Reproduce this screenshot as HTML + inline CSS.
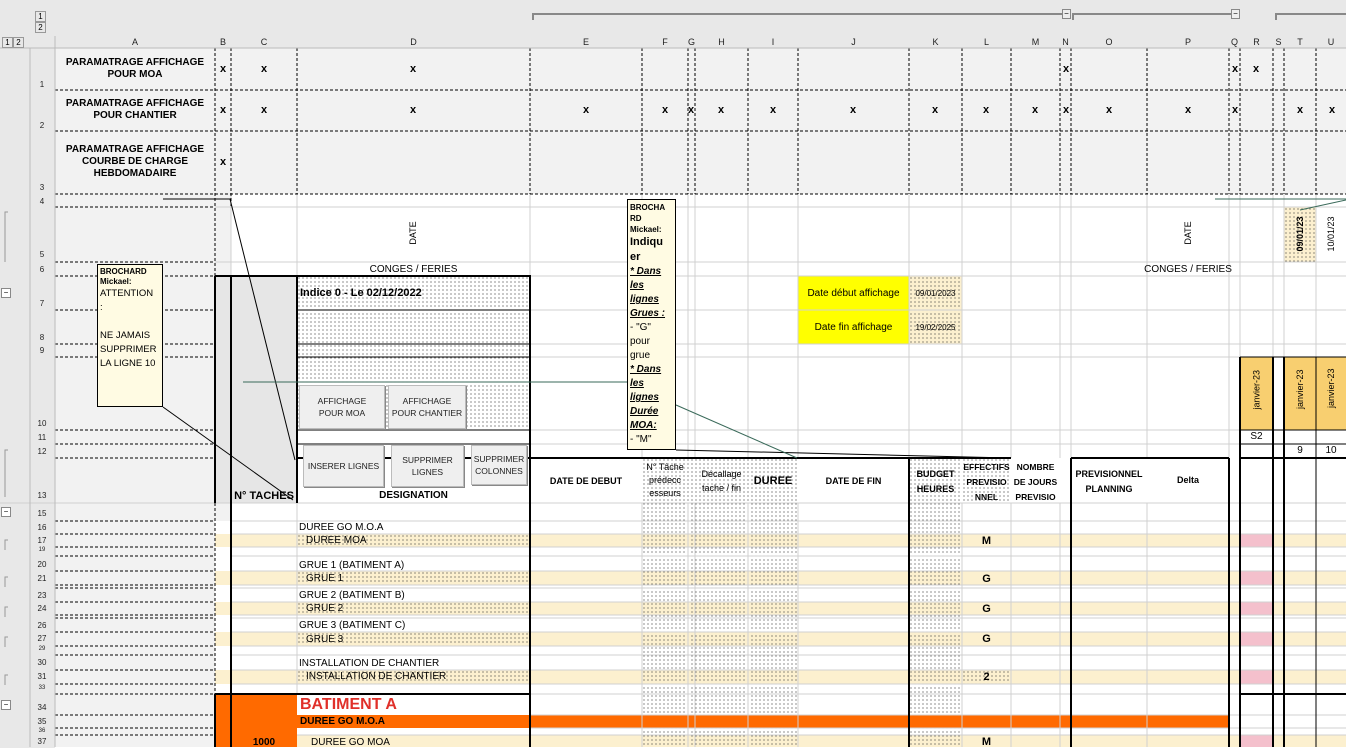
<!DOCTYPE html>
<html><head><meta charset="utf-8"><style>
*{margin:0;padding:0;box-sizing:border-box}
body{width:1346px;height:747px;overflow:hidden;position:relative;background:#fff;font-family:"Liberation Sans",Arial,sans-serif;font-size:10px;color:#000}
.a{position:absolute}
.c{position:absolute;text-align:center;white-space:nowrap}
.dot{background-image:radial-gradient(#333 0.5px,transparent 0.8px);background-size:4px 4px}
.cr{background-color:#fcf0cf}
.btn{position:absolute;background:#efefef;border:1px solid #bbb;box-shadow:1px 1px 0 #888;font-size:8.5px;text-align:center;display:flex;align-items:center;justify-content:center;line-height:12px;color:#222}
.rn{position:absolute;left:30px;width:24px;text-align:center;font-size:8px;color:#222}
.h{position:absolute;top:37px;font-size:9px;text-align:center;color:#222}
.b{font-weight:bold}
.x{position:absolute;font-size:11px;font-weight:bold;transform:translateX(-50%)}
</style></head><body>
<div class="a" style="left:0;top:0;width:1346px;height:48px;background:#e8e8e8"></div>
<div class="a" style="left:0;top:48px;width:55px;height:700px;background:#e8e8e8"></div>
<div class="a" style="left:55px;top:48px;width:1291px;height:146px;background:#f2f2f2"></div>
<div class="a" style="left:55px;top:194px;width:160px;height:553px;background:#f2f2f2"></div>
<div class="a" style="left:215px;top:194px;width:16px;height:327px;background:#f2f2f2"></div>
<div class="a cr" style="left:215px;top:534px;width:1131px;height:13px"></div>
<div class="a cr" style="left:215px;top:571px;width:1131px;height:14px"></div>
<div class="a cr" style="left:215px;top:602px;width:1131px;height:13px"></div>
<div class="a cr" style="left:215px;top:632px;width:1131px;height:14px"></div>
<div class="a cr" style="left:215px;top:670px;width:1131px;height:14px"></div>
<div class="a cr" style="left:215px;top:735px;width:1131px;height:12px"></div>
<div class="a dot" style="left:642px;top:458px;width:156px;height:289px"></div>
<div class="a dot" style="left:909px;top:458px;width:53px;height:289px"></div>
<div class="a dot" style="left:962px;top:458px;width:49px;height:45px"></div>
<div class="a dot" style="left:962px;top:670px;width:49px;height:14px"></div>
<div class="a dot" style="left:297px;top:534px;width:233px;height:13px"></div>
<div class="a dot" style="left:297px;top:571px;width:233px;height:14px"></div>
<div class="a dot" style="left:297px;top:602px;width:233px;height:13px"></div>
<div class="a dot" style="left:297px;top:632px;width:233px;height:14px"></div>
<div class="a dot" style="left:297px;top:670px;width:233px;height:14px"></div>
<div class="a" style="left:215px;top:276px;width:82px;height:227px;background:#e6e6e6"></div>
<div class="a dot" style="left:297px;top:276px;width:233px;height:154px"></div>
<div class="a" style="left:215px;top:694px;width:82px;height:53px;background:#ff6a00"></div>
<div class="a" style="left:297px;top:715px;width:932px;height:13px;background:#ff6a00"></div>
<div class="a" style="left:1240px;top:534px;width:33px;height:13px;background:#f4c0cc"></div>
<div class="a" style="left:1240px;top:571px;width:33px;height:14px;background:#f4c0cc"></div>
<div class="a" style="left:1240px;top:602px;width:33px;height:13px;background:#f4c0cc"></div>
<div class="a" style="left:1240px;top:632px;width:33px;height:14px;background:#f4c0cc"></div>
<div class="a" style="left:1240px;top:670px;width:33px;height:14px;background:#f4c0cc"></div>
<div class="a" style="left:1240px;top:735px;width:33px;height:12px;background:#f4c0cc"></div>
<div class="a" style="left:798px;top:276px;width:111px;height:68px;background:#ffff00"></div>
<div class="a dot cr" style="left:909px;top:276px;width:53px;height:68px"></div>
<div class="a dot cr" style="left:1284px;top:207px;width:32px;height:55px"></div>
<div class="a" style="left:1240px;top:357px;width:33px;height:73px;background:#f8cf70"></div>
<div class="a" style="left:1284px;top:357px;width:32px;height:73px;background:#f8cf70"></div>
<div class="a" style="left:1316px;top:357px;width:30px;height:73px;background:#f8cf70"></div>

<svg class="a" style="left:0;top:0" width="1346" height="747">
<g stroke="#d0d0d0" stroke-width="1">
<path d="M530 194V458M642 194V458M688 194V458M695 194V458M748 194V458M798 194V458M909 194V458M962 194V458M1011 194V458M1060 194V458M1071 194V458M1147 194V458M1229 194V458M1240 194V357M1273 194V357M1284 194V357M1316 194V357"/>
<path d="M215 207H1346M215 262H1346M530 276H1346M530 310H1346M530 344H1346M530 357H1346M530 430H1240M530 444H1240M297 194V276M231 194V276"/>
<path d="M231 521H1346M231 534H1346M231 547H1346M231 556H1346M231 571H1346M231 585H1346M231 588H1346M231 602H1346M231 615H1346M231 618H1346M231 632H1346M231 646H1346M231 655H1346M231 670H1346M231 684H1346M231 694H1346M530 715H1346M530 728H1346M297 735H1346"/>
<path d="M297 503V694M642 503V747M688 503V747M695 503V747M748 503V747M798 503V747M962 503V747M1011 503V747M1060 503V747M1147 503V747"/>
<path d="M0 503H1346"/>
</g>
<g stroke="#000" stroke-width="1" stroke-dasharray="3 2">
<path d="M55 90H1346M55 131H1346M55 194H1346M55 207H215M55 262H215M55 276H215M55 310H215M55 344H215M55 357H215M55 430H215M55 444H215M55 458H215M55 521H215M55 534H215M55 547H215M55 556H215M55 571H215M55 585H215M55 588H215M55 602H215M55 615H215M55 618H215M55 632H215M55 646H215M55 655H215M55 670H215M55 684H215M55 694H215M55 715H215M55 728H215M55 735H215"/>
<path d="M215 48V747M231 48V207M297 48V194M530 48V194M642 48V194M688 48V194M695 48V194M748 48V194M798 48V194M909 48V194M962 48V194M1011 48V194M1060 48V194M1071 48V194M1147 48V194M1229 48V194M1240 48V194M1273 48V194M1284 48V194M1316 48V194"/>
</g>
<g stroke="#000" stroke-width="2" fill="none">
<path d="M215 276H530V503M215 276V503M231 276V747M297 276V503M297 458H1011M1071 458H1229M1240 458H1346M530 458V747M909 458V747M1071 458V747M1229 458V747M1273 357V747M1284 357V747M215 694H530M215 694V747M1240 357V747M1240 694H1346"/>
</g>
<g stroke="#000" stroke-width="1" fill="none">
<path d="M297 310H530M297 344H530M297 357H530M297 430H530M297 444H530M1316 357V747M1240 430H1273M1240 444H1346M1316 444V458M1240 357H1346M1240 430H1346"/>
<path d="M163 199H230L295 460"/><path d="M163 407L293 500"/>
<path d="M676 450L1010 458"/>
</g>
<g stroke="#3a6a5a" stroke-width="1"><path d="M243 382H627M676 405L797 458M1215 199H1346M1300 210L1346 200"/></g>
<g stroke="#888" stroke-width="2" fill="none"><path d="M533 20V14H1068M1073 20V14H1236M1276 20V14H1346"/></g>
<g stroke="#bbb" stroke-width="1"><path d="M30 48V747M55 36V747M0 48H1346"/></g>
<g stroke="#999" fill="none"><path d="M8 212H5V262M8 450H5V497M8 540H5V550M8 577H5V587M8 607H5V617M8 637H5V647M8 675H5V685"/></g>
</svg>
<div class="a" style="left:35px;top:11px;width:11px;height:11px;border:1px solid #999;font-size:8px;text-align:center;line-height:9px">1</div>
<div class="a" style="left:35px;top:22px;width:11px;height:11px;border:1px solid #999;font-size:8px;text-align:center;line-height:9px">2</div>
<div class="a" style="left:2px;top:37px;width:11px;height:11px;border:1px solid #999;font-size:8px;text-align:center;line-height:9px">1</div>
<div class="a" style="left:13px;top:37px;width:11px;height:11px;border:1px solid #999;font-size:8px;text-align:center;line-height:9px">2</div>
<div class="a" style="left:1062px;top:9px;width:9px;height:10px;border:1px solid #888;background:#eee;font-size:8px;line-height:7px;text-align:center">−</div>
<div class="a" style="left:1231px;top:9px;width:9px;height:10px;border:1px solid #888;background:#eee;font-size:8px;line-height:7px;text-align:center">−</div>
<div class="a" style="left:1px;top:288px;width:10px;height:10px;border:1px solid #888;background:#fff;font-size:8px;line-height:7px;text-align:center">−</div>
<div class="a" style="left:1px;top:507px;width:10px;height:10px;border:1px solid #888;background:#fff;font-size:8px;line-height:7px;text-align:center">−</div>
<div class="a" style="left:1px;top:700px;width:10px;height:10px;border:1px solid #888;background:#fff;font-size:8px;line-height:7px;text-align:center">−</div>

<div class="h" style="left:55px;width:160px">A</div><div class="h" style="left:215px;width:16px">B</div><div class="h" style="left:231px;width:66px">C</div><div class="h" style="left:297px;width:233px">D</div><div class="h" style="left:530px;width:112px">E</div><div class="h" style="left:642px;width:46px">F</div><div class="h" style="left:688px;width:7px">G</div><div class="h" style="left:695px;width:53px">H</div><div class="h" style="left:748px;width:50px">I</div><div class="h" style="left:798px;width:111px">J</div><div class="h" style="left:909px;width:53px">K</div><div class="h" style="left:962px;width:49px">L</div><div class="h" style="left:1011px;width:49px">M</div><div class="h" style="left:1060px;width:11px">N</div><div class="h" style="left:1071px;width:76px">O</div><div class="h" style="left:1147px;width:82px">P</div><div class="h" style="left:1229px;width:11px">Q</div><div class="h" style="left:1240px;width:33px">R</div><div class="h" style="left:1273px;width:11px">S</div><div class="h" style="left:1284px;width:32px">T</div><div class="h" style="left:1316px;width:30px">U</div>

<div class="rn" style="top:80px">1</div><div class="rn" style="top:121px">2</div><div class="rn" style="top:183px">3</div><div class="rn" style="top:197px">4</div><div class="rn" style="top:250px">5</div><div class="rn" style="top:265px">6</div><div class="rn" style="top:299px">7</div><div class="rn" style="top:333px">8</div><div class="rn" style="top:346px">9</div><div class="rn" style="top:419px">10</div><div class="rn" style="top:433px">11</div><div class="rn" style="top:447px">12</div><div class="rn" style="top:491px">13</div><div class="rn" style="top:509px">15</div><div class="rn" style="top:523px">16</div><div class="rn" style="top:536px">17</div><div class="rn" style="top:547px;font-size:6px">19</div><div class="rn" style="top:560px">20</div><div class="rn" style="top:574px">21</div><div class="rn" style="top:591px">23</div><div class="rn" style="top:604px">24</div><div class="rn" style="top:621px">26</div><div class="rn" style="top:634px">27</div><div class="rn" style="top:646px;font-size:6px">29</div><div class="rn" style="top:658px">30</div><div class="rn" style="top:672px">31</div><div class="rn" style="top:685px;font-size:6px">33</div><div class="rn" style="top:703px">34</div><div class="rn" style="top:717px">35</div><div class="rn" style="top:728px;font-size:6px">36</div><div class="rn" style="top:737px">37</div>

<div class="c b" style="left:55px;top:57px;width:160px;font-size:10px;line-height:12px">PARAMATRAGE AFFICHAGE<br>POUR MOA</div>
<div class="c b" style="left:55px;top:98px;width:160px;font-size:10px;line-height:12px">PARAMATRAGE AFFICHAGE<br>POUR CHANTIER</div>
<div class="c b" style="left:55px;top:144px;width:160px;font-size:10px;line-height:12px">PARAMATRAGE AFFICHAGE<br>COURBE DE CHARGE<br>HEBDOMADAIRE</div>
<div class="x" style="left:223px;top:63px">x</div><div class="x" style="left:264px;top:63px">x</div><div class="x" style="left:413px;top:63px">x</div><div class="x" style="left:1066px;top:63px">x</div><div class="x" style="left:1235px;top:63px">x</div><div class="x" style="left:1256px;top:63px">x</div>
<div class="x" style="left:223px;top:104px">x</div><div class="x" style="left:264px;top:104px">x</div><div class="x" style="left:413px;top:104px">x</div><div class="x" style="left:586px;top:104px">x</div><div class="x" style="left:665px;top:104px">x</div><div class="x" style="left:691px;top:104px">x</div><div class="x" style="left:721px;top:104px">x</div><div class="x" style="left:773px;top:104px">x</div><div class="x" style="left:853px;top:104px">x</div><div class="x" style="left:935px;top:104px">x</div><div class="x" style="left:986px;top:104px">x</div><div class="x" style="left:1035px;top:104px">x</div><div class="x" style="left:1066px;top:104px">x</div><div class="x" style="left:1109px;top:104px">x</div><div class="x" style="left:1188px;top:104px">x</div><div class="x" style="left:1235px;top:104px">x</div><div class="x" style="left:1300px;top:104px">x</div><div class="x" style="left:1332px;top:104px">x</div>
<div class="x" style="left:223px;top:156px">x</div>

<div class="c" style="left:398px;top:228px;width:30px;font-size:9px;transform:rotate(-90deg)">DATE</div>
<div class="c" style="left:1173px;top:228px;width:30px;font-size:9px;transform:rotate(-90deg)">DATE</div>
<div class="c b" style="left:1275px;top:229px;width:50px;font-size:9px;transform:rotate(-90deg)">09/01/23</div>
<div class="c" style="left:1306px;top:229px;width:50px;font-size:9px;transform:rotate(-90deg)">10/01/23</div>
<div class="c" style="left:297px;top:264px;width:233px">CONGES / FERIES</div>
<div class="c" style="left:1110px;top:264px;width:156px">CONGES / FERIES</div>
<div class="c" style="left:798px;top:288px;width:111px">Date début affichage</div>
<div class="c" style="left:798px;top:322px;width:111px">Date fin affichage</div>
<div class="c" style="left:909px;top:289px;width:53px;font-size:8px">09/01/2023</div>
<div class="c" style="left:909px;top:323px;width:53px;font-size:8px">19/02/2025</div>
<div class="c" style="left:1240px;top:388px;width:33px;font-size:9px;transform:rotate(-90deg)">janvier-23</div>
<div class="c" style="left:1284px;top:388px;width:32px;font-size:9px;transform:rotate(-90deg)">janvier-23</div>
<div class="c" style="left:1316px;top:388px;width:30px;font-size:9px;transform:rotate(-90deg)">janvier-23</div>
<div class="c" style="left:1240px;top:431px;width:33px">S2</div>
<div class="c" style="left:1284px;top:445px;width:32px">9</div>
<div class="c" style="left:1316px;top:445px;width:30px">10</div>

<div class="a b" style="left:300px;top:287px;font-size:11px">Indice 0 - Le 02/12/2022</div>
<div class="btn" style="left:299px;top:385px;width:86px;height:44px">AFFICHAGE<br>POUR MOA</div>
<div class="btn" style="left:388px;top:385px;width:78px;height:44px">AFFICHAGE<br>POUR CHANTIER</div>
<div class="btn" style="left:303px;top:445px;width:81px;height:42px">INSERER LIGNES</div>
<div class="btn" style="left:391px;top:445px;width:73px;height:42px">SUPPRIMER<br>LIGNES</div>
<div class="btn" style="left:471px;top:445px;width:56px;height:40px">SUPPRIMER<br>COLONNES</div>
<div class="c b" style="left:231px;top:490px;width:66px;font-size:11px">N° TACHES</div>
<div class="c b" style="left:297px;top:490px;width:233px">DESIGNATION</div>

<div class="c b" style="left:530px;top:476px;width:112px;font-size:9px">DATE DE DEBUT</div>
<div class="c" style="left:642px;top:461px;width:46px;font-size:9px;line-height:13px">N° Tâche<br>prédecc<br>esseurs</div>
<div class="c" style="left:695px;top:467px;width:53px;font-size:9px;line-height:14px">Décallage<br>tache / fin</div>
<div class="c b" style="left:748px;top:475px;width:50px;font-size:11px">DUREE</div>
<div class="c b" style="left:798px;top:476px;width:111px;font-size:9px">DATE DE FIN</div>
<div class="c b" style="left:909px;top:467px;width:53px;font-size:9px;line-height:15px">BUDGET<br>HEURES</div>
<div class="c b" style="left:962px;top:460px;width:49px;font-size:8.5px;line-height:15px">EFFECTIFS<br>PREVISIO<br>NNEL</div>
<div class="c b" style="left:1011px;top:460px;width:49px;font-size:8.5px;line-height:15px">NOMBRE<br>DE JOURS<br>PREVISIO</div>
<div class="c b" style="left:1071px;top:467px;width:76px;font-size:9px;line-height:15px">PREVISIONNEL<br>PLANNING</div>
<div class="c b" style="left:1147px;top:475px;width:82px;font-size:9px">Delta</div>

<div class="a" style="left:299px;top:522px">DUREE GO M.O.A</div>
<div class="a" style="left:306px;top:535px">DUREE MOA</div>
<div class="a" style="left:299px;top:560px">GRUE 1 (BATIMENT A)</div>
<div class="a" style="left:306px;top:573px">GRUE 1</div>
<div class="a" style="left:299px;top:590px">GRUE 2 (BATIMENT B)</div>
<div class="a" style="left:306px;top:603px">GRUE 2</div>
<div class="a" style="left:299px;top:620px">GRUE 3 (BATIMENT C)</div>
<div class="a" style="left:306px;top:634px">GRUE 3</div>
<div class="a" style="left:299px;top:658px">INSTALLATION DE CHANTIER</div>
<div class="a" style="left:306px;top:671px">INSTALLATION DE CHANTIER</div>
<div class="c b" style="left:962px;top:535px;width:49px;font-size:11px">M</div>
<div class="c b" style="left:962px;top:573px;width:49px;font-size:11px">G</div>
<div class="c b" style="left:962px;top:603px;width:49px;font-size:11px">G</div>
<div class="c b" style="left:962px;top:633px;width:49px;font-size:11px">G</div>
<div class="c b" style="left:962px;top:671px;width:49px;font-size:11px">2</div>
<div class="c b" style="left:962px;top:736px;width:49px;font-size:11px">M</div>
<div class="a b" style="left:300px;top:696px;font-size:16px;color:#e0302a">BATIMENT A</div>
<div class="a b" style="left:300px;top:716px;font-size:10px">DUREE GO M.O.A</div>
<div class="c b" style="left:231px;top:737px;width:66px">1000</div>
<div class="a" style="left:311px;top:737px">DUREE GO MOA</div>

<div class="a" style="left:97px;top:264px;width:66px;height:143px;background:#fffbe3;border:1px solid #000;padding:2px;font-size:9.5px;line-height:14px;overflow:hidden"><b style="font-size:8px;line-height:10px;display:block">BROCHARD<br>Mickael:</b>ATTENTION<br>:<br><br>NE JAMAIS SUPPRIMER LA LIGNE 10</div>
<div class="a" style="left:627px;top:199px;width:49px;height:251px;background:#fffbe3;border:1px solid #000;padding:2px;font-size:10px;line-height:14px;overflow:hidden"><b style="font-size:8px;line-height:11px;display:block">BROCHA<br>RD<br>Mickael:</b><b style="font-size:11px">Indiqu<br>er</b><br><b><i><u>* Dans<br>les<br>lignes<br>Grues :</u></i></b><br>- "G"<br>pour<br>grue<br><b><i><u>* Dans<br>les<br>lignes<br>Durée<br>MOA:</u></i></b><br>- "M"<br>pour</div>
</body></html>
